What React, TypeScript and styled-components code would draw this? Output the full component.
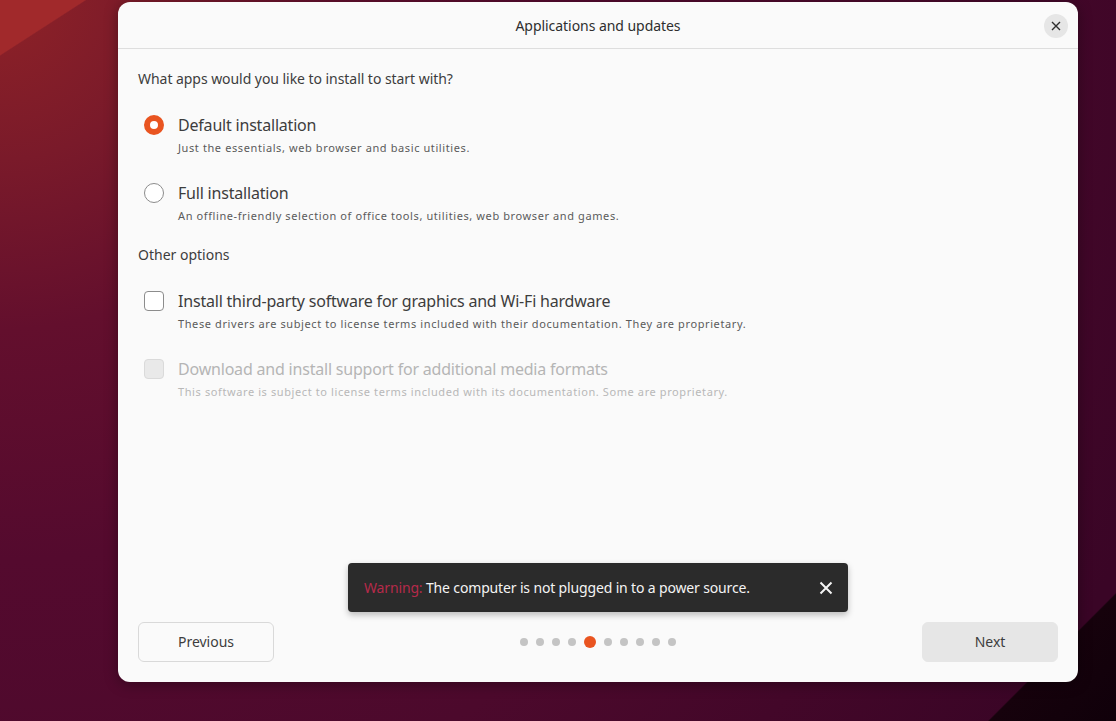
import React from "react";
import styled, { createGlobalStyle } from "styled-components";

const Global = createGlobalStyle`
  html, body { margin: 0; padding: 0; }
  body {
    width: 1116px;
    height: 721px;
    overflow: hidden;
    font-family: "Noto Sans", "Open Sans", sans-serif;
    background:
      linear-gradient(135deg, transparent 0, transparent 93%, #16020c 93.1%, #10000a 100%),
      linear-gradient(to bottom right, #a1292b 0, #a1292b 3.8%, rgba(0,0,0,0) 3.9%),
      radial-gradient(circle at 0 0, #8e2227 0, #7a1a2a 160px, #630f2d 330px, #540a2e 560px, #4c092c 850px, #3a0526 1250px);
  }
`;

const Desktop = styled.div`
  width: 1116px;
  height: 721px;
  padding: 2px 0 0 118px;
  box-sizing: border-box;
`;

const Dialog = styled.div`
  position: relative;
  width: 960px;
  height: 680px;
  background: #fafafa;
  border-radius: 12px;
  display: flex;
  flex-direction: column;
  box-shadow: 0 2px 14px rgba(0,0,0,0.35);
  overflow: hidden;
`;

const Header = styled.div`
  height: 46px;
  border-bottom: 1px solid #dedede;
  display: flex;
  align-items: center;
  justify-content: center;
  position: relative;
  flex-shrink: 0;
`;

const Title = styled.div`
  font-size: 14px;
  color: #2e2e2e;
  margin-top: 1px;
  letter-spacing: -0.05px;
`;

const CloseBtn = styled.div`
  position: absolute;
  right: 10px;
  top: 12px;
  width: 24px;
  height: 24px;
  border-radius: 50%;
  background: #e6e6e6;
  display: flex;
  align-items: center;
  justify-content: center;
`;

const Content = styled.div`
  flex: 1;
  padding: 20px 20px 0 20px;
  display: flex;
  flex-direction: column;
`;

const Question = styled.div`
  font-size: 14px;
  line-height: 20px;
  color: #3d3d3d;
  letter-spacing: -0.05px;
`;

const Section = styled.div`
  font-size: 14px;
  line-height: 20px;
  color: #3d3d3d;
  margin-top: 21px;
`;

const Option = styled.div<{ $gap: number }>`
  display: grid;
  grid-template-columns: 20px 1fr;
  column-gap: 14px;
  padding-left: 6px;
  margin-top: ${(p) => p.$gap}px;
`;

const Control = styled.div`
  display: flex;
  align-items: center;
  height: 24px;
`;

const RadioCircle = styled.div<{ $on?: boolean }>`
  width: 20px;
  height: 20px;
  box-sizing: border-box;
  border-radius: 50%;
  border: ${(p) => (p.$on ? "6px solid #e95420" : "1px solid #8c8c8c")};
  background: #ffffff;
`;

const CheckBox = styled.div<{ $disabled?: boolean }>`
  width: 20px;
  height: 20px;
  box-sizing: border-box;
  border-radius: 4px;
  border: 1px solid ${(p) => (p.$disabled ? "#dadada" : "#8c8c8c")};
  background: ${(p) => (p.$disabled ? "#e9e9e9" : "#ffffff")};
`;

const Label = styled.div<{ $disabled?: boolean }>`
  font-size: 16px;
  line-height: 24px;
  letter-spacing: -0.2px;
  color: ${(p) => (p.$disabled ? "#b5b5b5" : "#3d3d3d")};
`;

const Desc = styled.div<{ $disabled?: boolean }>`
  grid-column: 2;
  font-size: 11px;
  line-height: 16px;
  margin-top: 3px;
  letter-spacing: 0.6px;
  color: ${(p) => (p.$disabled ? "#b8b8b8" : "#5a5a5a")};
`;

const Footer = styled.div`
  display: flex;
  align-items: center;
  justify-content: space-between;
  padding: 0 20px 20px 20px;
`;

const Button = styled.div<{ $primary?: boolean }>`
  width: 136px;
  height: 40px;
  box-sizing: border-box;
  border-radius: 6px;
  display: flex;
  align-items: center;
  justify-content: center;
  font-size: 14px;
  color: #3d3d3d;
  padding-bottom: 1px;
  background: ${(p) => (p.$primary ? "#e6e6e6" : "#fafafa")};
  border: 1px solid ${(p) => (p.$primary ? "#e6e6e6" : "#d9d9d9")};
`;

const Dots = styled.div`
  display: flex;
  align-items: center;
  gap: 8px;
`;

const Dot = styled.div<{ $active?: boolean }>`
  width: ${(p) => (p.$active ? 12 : 8)}px;
  height: ${(p) => (p.$active ? 12 : 8)}px;
  border-radius: 50%;
  background: ${(p) => (p.$active ? "#e95420" : "#c4c4c4")};
`;

const Toast = styled.div`
  position: absolute;
  left: 230px;
  top: 561px;
  width: 500px;
  height: 49px;
  box-sizing: border-box;
  background: #2b2b2b;
  border-radius: 4px;
  display: flex;
  align-items: center;
  justify-content: space-between;
  padding: 0 12px 0 16px;
  box-shadow: 0 3px 6px rgba(0,0,0,0.25);
  font-size: 14px;
  letter-spacing: -0.15px;
  color: #f4f4f4;
`;

const Warn = styled.span`
  color: #b52a4a;
`;

const ToastClose = styled.div`
  width: 20px;
  height: 20px;
  display: flex;
  align-items: center;
  justify-content: center;
`;

export default function App() {
  return (
    <>
      <Global />
      <Desktop>
        <Dialog>
          <Header>
            <Title>Applications and updates</Title>
            <CloseBtn>
              <svg width="10" height="10" viewBox="0 0 10 10">
                <path d="M1 1L9 9M9 1L1 9" stroke="#2e2e2e" strokeWidth="1.4" />
              </svg>
            </CloseBtn>
          </Header>
          <Content>
            <Question>What apps would you like to install to start with?</Question>
            <Option $gap={24}>
              <Control><RadioCircle $on /></Control>
              <Label>Default installation</Label>
              <Desc>Just the essentials, web browser and basic utilities.</Desc>
            </Option>
            <Option $gap={25}>
              <Control><RadioCircle /></Control>
              <Label>Full installation</Label>
              <Desc>An offline-friendly selection of office tools, utilities, web browser and games.</Desc>
            </Option>
            <Section>Other options</Section>
            <Option $gap={24}>
              <Control><CheckBox /></Control>
              <Label>Install third-party software for graphics and Wi-Fi hardware</Label>
              <Desc>These drivers are subject to license terms included with their documentation. They are proprietary.</Desc>
            </Option>
            <Option $gap={25}>
              <Control><CheckBox $disabled /></Control>
              <Label $disabled>Download and install support for additional media formats</Label>
              <Desc $disabled>This software is subject to license terms included with its documentation. Some are proprietary.</Desc>
            </Option>
          </Content>
          <Footer>
            <Button>Previous</Button>
            <Dots>
              {Array.from({ length: 10 }).map((_, i) => (
                <Dot key={i} $active={i === 4} />
              ))}
            </Dots>
            <Button $primary>Next</Button>
          </Footer>
          <Toast>
            <span>
              <Warn>Warning:</Warn> The computer is not plugged in to a power source.
            </span>
            <ToastClose>
              <svg width="14" height="14" viewBox="0 0 14 14">
                <path d="M1.5 1.5L12.5 12.5M12.5 1.5L1.5 12.5" stroke="#f4f4f4" strokeWidth="2" />
              </svg>
            </ToastClose>
          </Toast>
        </Dialog>
      </Desktop>
    </>
  );
}
